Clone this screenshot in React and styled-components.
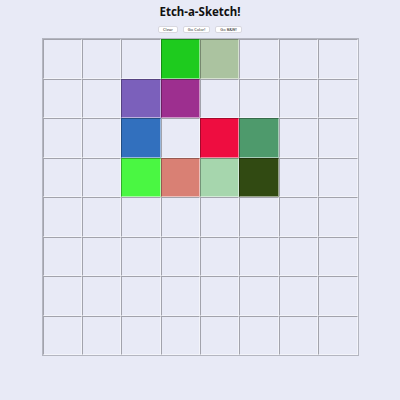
import React from "react";
import styled, { createGlobalStyle } from "styled-components";

const Global = createGlobalStyle`
  html, body { margin: 0; padding: 0; background: #e8eaf6; }
  body { font-family: "Noto Sans", "Open Sans", sans-serif; }
`;

const Page = styled.div`
  width: 400px;
  height: 400px;
  display: flex;
  flex-direction: column;
  align-items: center;
  background: #e8eaf6;
`;

const Title = styled.h1`
  margin: 4px 0 0;
  font-size: 11.5px;
  line-height: 16px;
  font-weight: 700;
  color: #111;
`;

const Controls = styled.div`
  display: flex;
  gap: 5px;
  margin-top: 6px;
`;

const Button = styled.button`
  font-family: inherit;
  font-size: 4px;
  height: 7px;
  padding: 0 4px;
  background: #fff;
  border: 1px solid #d8d8e0;
  border-radius: 2px;
  color: #222;
  line-height: 1;
`;

const Grid = styled.div`
  margin-top: 5px;
  width: 317px;
  height: 318px;
  display: grid;
  grid-template-columns: repeat(8, 1fr);
  grid-template-rows: repeat(8, 1fr);
  border: 1px solid #b4b6c0;
  box-sizing: border-box;
`;

const Cell = styled.div`
  background: ${(p) => p.$color || "#e8eaf6"};
  border-left: 1px solid rgba(0, 0, 0, 0.3);
  border-top: 1px solid rgba(0, 0, 0, 0.3);
  border-right: 1px solid rgba(255, 255, 255, 0.5);
  border-bottom: 1px solid rgba(255, 255, 255, 0.5);
  box-sizing: border-box;
`;

const colors = {
  "0-3": "#1ecb1e",
  "0-4": "#abc3a0",
  "1-2": "#7b60bb",
  "1-3": "#9d2f8f",
  "2-2": "#3270be",
  "2-4": "#ee0d40",
  "2-5": "#4e9a6c",
  "3-2": "#4af742",
  "3-3": "#d98074",
  "3-4": "#a6d6ad",
  "3-5": "#314a12",
};

export default function App() {
  const cells = [];
  for (let r = 0; r < 8; r++) {
    for (let c = 0; c < 8; c++) {
      cells.push(<Cell key={`${r}-${c}`} $color={colors[`${r}-${c}`]} />);
    }
  }
  return (
    <Page>
      <Global />
      <Title>Etch-a-Sketch!</Title>
      <Controls>
        <Button>Clear</Button>
        <Button>Go Color!</Button>
        <Button>Go B&amp;W!</Button>
      </Controls>
      <Grid>{cells}</Grid>
    </Page>
  );
}
